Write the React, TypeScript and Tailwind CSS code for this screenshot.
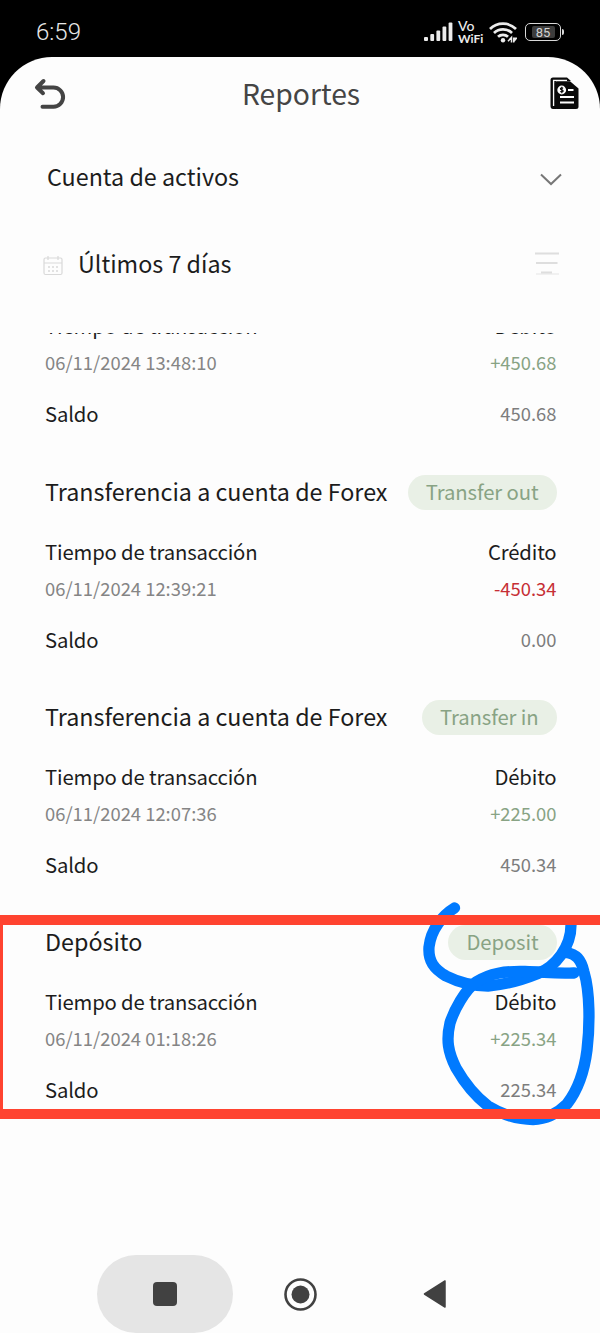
type Entry = {
  title: string;
  tag: string;
  kind: string;
  time: string;
  amount: string;
  tone: string;
  balance: string;
};

const entries: Entry[] = [
  { title: "Transferencia a cuenta de Forex", tag: "Transfer out", kind: "Crédito", time: "06/11/2024 12:39:21", amount: "-450.34", tone: "text-[#c62f35]", balance: "0.00" },
  { title: "Transferencia a cuenta de Forex", tag: "Transfer in", kind: "Débito", time: "06/11/2024 12:07:36", amount: "+225.00", tone: "text-[#88a384]", balance: "450.34" },
  { title: "Depósito", tag: "Deposit", kind: "Débito", time: "06/11/2024 01:18:26", amount: "+225.34", tone: "text-[#88a384]", balance: "225.34" },
];

function Details({ kind, time, amount, tone, balance }: Omit<Entry, "title" | "tag">) {
  return (
    <>
      <div className="flex h-9 items-center justify-between pb-[2px] text-[20.3px] tracking-[-0.15px] text-[#1c1c1c]">
        <span>Tiempo de transacción</span>
        <span>{kind}</span>
      </div>
      <div className="flex h-[38px] items-center justify-between pb-[1px] text-[18.4px]">
        <span className="text-[#858585]">{time}</span>
        <span className={tone}>{amount}</span>
      </div>
      <div className="mb-[26px] flex h-[66px] items-center justify-between pb-[3px]">
        <span className="text-[20.3px] tracking-[-0.15px] text-[#1c1c1c]">Saldo</span>
        <span className="text-[18.4px] text-[#7d7d7d]">{balance}</span>
      </div>
    </>
  );
}

function StatusBar() {
  return (
    <div className="flex h-[57px] items-center justify-between pr-[36px] pl-[36px] pt-[7px]">
      <span className="font-['Roboto','Liberation_Sans',sans-serif] text-[24px] leading-none font-light text-[#e8e8e8]">6:59</span>
      <div className="flex items-center text-[#ececec]">
        <svg width="29" height="20" viewBox="0 0 29 20" fill="currentColor">
          <rect x="0" y="15" width="4" height="4" rx="1" />
          <rect x="6.3" y="12" width="3.8" height="7" rx="1" />
          <rect x="12.4" y="8.5" width="3.8" height="10.5" rx="1" />
          <rect x="18.5" y="4.5" width="3.8" height="14.5" rx="1" />
          <rect x="24.6" y="0.5" width="3.8" height="18.5" rx="1" />
        </svg>
        <div className="ml-[5px] flex w-[26px] flex-col gap-[1px] font-['Lato',sans-serif] leading-[12px]">
          <span className="h-3 text-[14px] font-medium">Vo</span>
          <span className="h-3 text-[12px] font-bold">WiFi</span>
        </div>
        <svg className="ml-[5px]" width="28" height="21" viewBox="0 0 28 21" fill="none" stroke="currentColor" strokeWidth="2.7">
          <path d="M1 7a18.500 18.500 0 0 1 26 0M5 11a12.800 12.800 0 0 1 18 0M9 14.800a7.200 7.200 0 0 1 10 0" />
          <circle cx="14" cy="18.300" r="2.200" fill="currentColor" stroke="none" />
          <path d="M19 19.200L22.500 15.500V20.500M24.700 20.500V16.300H27.500L25 19.200" strokeWidth="1.500" />
        </svg>
        <div className="ml-[8px] flex h-[18px] w-[36px] items-center justify-center rounded-[5px] border-[1.5px] border-[#d8d8d8]">
          <span className="flex h-[12px] w-[23px] items-center justify-center rounded-[2px] bg-[#3c3c3c] font-['Roboto',sans-serif] text-[13px] leading-none text-[#d2d2d2]">85</span>
        </div>
        <span className="ml-[1px] h-[6px] w-[2px] rounded-r bg-[#d8d8d8]" />
      </div>
    </div>
  );
}

function Header() {
  return (
    <header className="grid h-[77px] grid-cols-[80px_1fr_80px] items-center pb-[4px]">
      <svg className="ml-[34px]" width="32" height="32" viewBox="0 0 31 32" fill="none" stroke="#444" strokeWidth="4" strokeLinecap="round" strokeLinejoin="round">
        <path d="M3 9.5H19a9.6 9.6 0 0 1 0 19.2H8M9 3L2.5 9.5L8.5 15.2" />
      </svg>
      <h1 className="ml-[2px] text-center text-[28.3px] leading-none text-[#454545]">Reportes</h1>
      <svg className="ml-[30px]" width="29" height="33" viewBox="0 0 29 33">
        <path d="M3 .5H17L21 4H6.500L5 5.500V28L7 32H3Q.5 32 .5 29V3Q.5.5 3 .5Z" fill="#0a0a0a" />
        <path d="M3.600 29V3.400H17" fill="none" stroke="#fff" strokeWidth="1.400" />
        <path d="M7 4.300H20L28.500 11.500V29.500Q28.500 32 26 32H7Q4.800 32 4.800 29.500V6Q4.800 4.300 7 4.300Z" fill="#0a0a0a" />
        <circle cx="11.700" cy="13" r="4.400" fill="#fff" />
        <path d="M13.200 11.200q-2.800-.8-2.800.6c0 1.400 2.800.8 2.800 2.200 0 1.300-2 1.100-3 .6M11.800 9.800v6.400" fill="none" stroke="#0a0a0a" strokeWidth="1.100" />
        <path d="M18 13H23.500M10 20H24M10 25.500H24" stroke="#fff" strokeWidth="2.100" />
      </svg>
    </header>
  );
}

function CalendarIcon() {
  return (
    <svg className="mt-[3px]" width="20" height="21" viewBox="0 0 20 21" fill="none" stroke="#d9d9d9" strokeWidth="1.200">
      <rect x="1" y="3" width="18" height="16.500" rx="1.500" />
      <path d="M1 8H19M5 1V5M15 1V5" />
      <path d="M5 12H7M9 12H11M13 12H15M5 16H7M9 16H11M13 16H15" strokeWidth="1.700" />
    </svg>
  );
}

function Annotations() {
  return (
    <div className="pointer-events-none absolute inset-0">
      <svg className="absolute inset-0" width="600" height="1333" viewBox="0 0 600 1333" fill="none" stroke="#007aff" strokeWidth="11.300" strokeLinecap="round" strokeLinejoin="round">
        <path d="M454.500 908C443 915 431 929 429 947C428 961 434 969 446 976C458 982 473 986 488 986C508 984.500 522 980 538 973.500C556 966 571 947 571 925" />
        <path d="M574 973C555 974 545 972 525 971.500C505 971 490 973 476 982C465 990 454 1010 450 1023C446 1040 448 1052 456 1068C464 1082 475 1096 488 1106C501 1114 516 1119.500 533 1119.500C549 1119 559 1112 567 1104C577 1091 584 1074 587 1050C590 1025 590 992 584 972C581 959 576 954 566 952.500" />
      </svg>
      <div className="absolute top-[915px] right-0 left-0 h-[204px] border-y-[10px] border-l-[3px] border-[#ff4330]" />
    </div>
  );
}

export default function App() {
  return (
    <div className="relative h-[1333px] w-[600px] overflow-hidden bg-black font-['Noto_Sans_CJK_SC','Noto_Sans',sans-serif] leading-none">
      <StatusBar />
      <div className="flex h-[1276px] flex-col rounded-t-[52px] bg-[#fdfdfd]">
        <Header />
        <div className="flex h-[86px] items-center justify-between pr-[38px] pl-[47px]">
          <span className="text-[23.3px] text-[#1c1c1c]">Cuenta de activos</span>
          <svg className="mt-1" width="22" height="13" viewBox="0 0 22 13" fill="none" stroke="#777" strokeWidth="2">
            <path d="M1 1.500L11 11L21 1.500" />
          </svg>
        </div>
        <div className="flex h-[88px] items-center pr-[40px] pl-[43px]">
          <CalendarIcon />
          <span className="mb-[1px] ml-[15px] text-[23.3px] text-[#1c1c1c]">Últimos 7 días</span>
          <svg className="mb-[2px] ml-auto" width="26" height="23" viewBox="0 0 26 23" fill="none" stroke="#dedede" strokeWidth="1.800">
            <path d="M1 1.500H25M2 11H23.500M7 20.500H18" />
            <path d="M2 22H25" strokeWidth=".8" />
          </svg>
        </div>
        <main className="mt-[25px] h-[800px] overflow-hidden pr-[43.5px] pl-[45px]">
          <div className="-mt-[25px] mb-[1px] flow-root">
            <Details kind="Débito" time="06/11/2024 13:48:10" amount="+450.68" tone="text-[#88a384]" balance="450.68" />
          </div>
          {entries.map((entry) => (
            <section key={entry.time}>
              <div className="mb-6 flex h-[35px] items-center justify-between">
                <h2 className="mb-[1px] text-[23.3px] text-[#1c1c1c]">{entry.title}</h2>
                <span className="flex h-[35px] items-center rounded-full bg-[#e9f0e6] px-[18px] pb-[2px] text-[20.3px] tracking-[-0.1px] text-[#88a384]">{entry.tag}</span>
              </div>
              <Details {...entry} />
            </section>
          ))}
        </main>
        <nav className="mt-auto flex h-[78px] items-center">
          <div className="ml-[97px] flex h-[78px] w-[136px] items-center justify-center rounded-full bg-[#e5e5e5]">
            <span className="h-6 w-6 rounded-[4px] bg-[#414141]" />
          </div>
          <svg className="ml-[51px]" width="33" height="33" viewBox="0 0 33 33">
            <circle cx="16.500" cy="16.500" r="15" fill="none" stroke="#414141" strokeWidth="2.600" />
            <circle cx="16.500" cy="16.500" r="9" fill="#414141" />
          </svg>
          <svg className="ml-[106px]" width="24" height="28" viewBox="0 0 24 28" fill="#414141" stroke="#414141" strokeWidth="1.500" strokeLinejoin="round">
            <path d="M1.500 14L22 1V27Z" />
          </svg>
        </nav>
      </div>
      <Annotations />
    </div>
  );
}
